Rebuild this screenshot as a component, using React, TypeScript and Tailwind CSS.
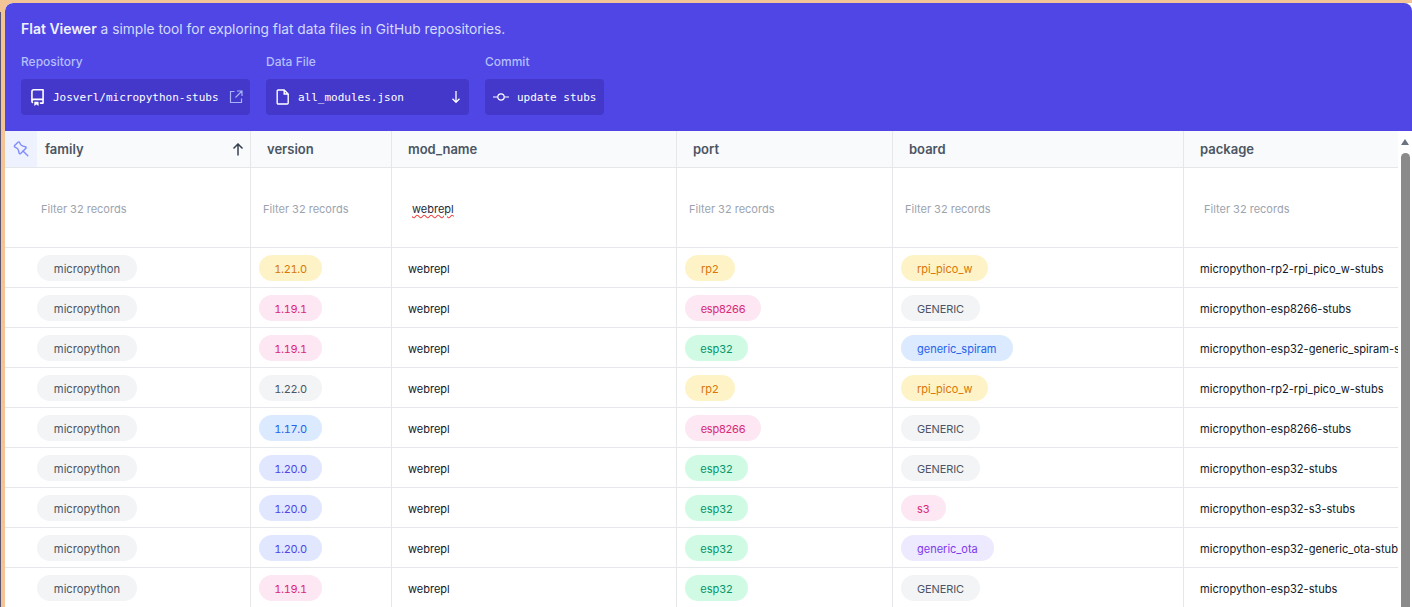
import React from "react";

const tone: Record<string, string> = {
  gray: "bg-[#f3f4f6] text-[#4b5563]",
  yellow: "bg-[#fef3c7] text-[#d97706]",
  pink: "bg-[#fce7f3] text-[#db2777]",
  blue: "bg-[#dbeafe] text-[#2563eb]",
  indigo: "bg-[#e0e7ff] text-[#4f46e5]",
  green: "bg-[#d1fae5] text-[#059669]",
  purple: "bg-[#ede9fe] text-[#7c3aed]",
};

const widths: Record<string, string> = {
  micropython: "w-[100px]",
  esp8266: "w-[76px] tracking-[-0.2px]",
  esp32: "w-[63px]",
  GENERIC: "w-[79px] tracking-[-0.1px]",
};

const cols = "grid grid-cols-[246px_141px_285px_216px_291px_214px]";

const rows: [string, string, string, string, string, string, string][] = [
  ["1.21.0", "yellow", "rp2", "yellow", "rpi_pico_w", "yellow", "micropython-rp2-rpi_pico_w-stubs"],
  ["1.19.1", "pink", "esp8266", "pink", "GENERIC", "gray", "micropython-esp8266-stubs"],
  ["1.19.1", "pink", "esp32", "green", "generic_spiram", "blue", "micropython-esp32-generic_spiram-stubs"],
  ["1.22.0", "gray", "rp2", "yellow", "rpi_pico_w", "yellow", "micropython-rp2-rpi_pico_w-stubs"],
  ["1.17.0", "blue", "esp8266", "pink", "GENERIC", "gray", "micropython-esp8266-stubs"],
  ["1.20.0", "indigo", "esp32", "green", "GENERIC", "gray", "micropython-esp32-stubs"],
  ["1.20.0", "indigo", "esp32", "green", "s3", "pink", "micropython-esp32-s3-stubs"],
  ["1.20.0", "indigo", "esp32", "green", "generic_ota", "purple", "micropython-esp32-generic_ota-stubs"],
  ["1.19.1", "pink", "esp32", "green", "GENERIC", "gray", "micropython-esp32-stubs"],
];

function Pill({ t, c, num }: { t: string; c: string; num?: boolean }) {
  const size = num ? "w-[63px] tabular-nums tracking-[-0.3px]" : widths[t] ?? "px-4";
  const font = t === "micropython" ? "text-[11.2px]" : "text-[11px]";
  return (
    <span className={`inline-flex h-[26px] items-center justify-center rounded-full leading-none ${font} ${size} ${tone[c]}`}>
      <span className="pt-[4px]">{t}</span>
    </span>
  );
}

function Head({ t, border = true }: { t: string; border?: boolean }) {
  return (
    <div className={`flex items-center pl-[16px] pt-[1px] text-[13px] font-semibold text-[#4b5563] ${border ? "border-r border-[#e5e7eb]" : ""}`}>{t}</div>
  );
}

function Filter({ t = "Filter 32 records", pl, dark }: { t?: string; pl: string; dark?: boolean }) {
  return (
    <div className={`flex items-center pt-[4px] ${pl} border-r border-[#e5e7eb] text-[11px] last:border-r-0`}>
      <span className={dark ? "text-[#1f2937] underline decoration-wavy decoration-[#ef4444]" : "text-[#9ca3af]"}>{t}</span>
    </div>
  );
}

export default function App() {
  return (
    <div className="flex h-[607px] w-[1412px] overflow-hidden bg-[#f3c596] font-['Inter',sans-serif]">
      <div className="mt-3 w-px shrink-0 bg-[#5a5470]" />
      <div className="ml-1 mt-[3px] flex h-[604px] w-[1407px] flex-col overflow-hidden rounded-tl-lg bg-white">
        <header className="h-[128px] shrink-0 rounded-t-lg bg-[#4f46e5] pl-4 pt-[18px]">
          <p className="text-[13.75px] leading-4 text-[#d3dbfe]">
            <span className="text-[14px] font-semibold text-[#eef2ff]">Flat Viewer</span> a simple tool for exploring flat data files in GitHub repositories.
          </p>
          <div className="mt-[16px] flex gap-4">
            <div>
              <div className="text-xs leading-[18px] font-medium text-[#b4bffd]">Repository</div>
              <div className="mt-[8px] flex h-9 w-[229px] items-center rounded bg-[#4338ca] pl-2 text-white">
                <svg width="17" height="17" viewBox="0 0 16 16" fill="currentColor" className="shrink-0">
                  <path fillRule="evenodd" d="M2 2.5A2.5 2.5 0 014.5 0h8.75a.75.75 0 01.75.75v12.5a.75.75 0 01-.75.75h-2.5a.75.75 0 110-1.5h1.75v-2h-8a1 1 0 00-.714 1.7.75.75 0 01-1.072 1.05A2.495 2.495 0 012 11.5v-9zm10.5-1V9h-8c-.356 0-.694.074-1 .208V2.5a1 1 0 011-1h8zM5 12.25v3.25a.25.25 0 00.4.2l1.45-1.087a.25.25 0 01.3 0L8.6 15.7a.25.25 0 00.4-.2v-3.25a.25.25 0 00-.25-.25h-3.5a.25.25 0 00-.25.25z" />
                </svg>
                <span className="ml-[7px] pt-[3px] font-['DejaVu_Sans_Mono',monospace] text-[11px]">Josverl/micropython-stubs</span>
                <svg width="14" height="14" viewBox="0 0 14 14" fill="none" stroke="#a5b4fc" strokeWidth="1.2" className="ml-[10px] shrink-0">
                  <path d="M5.5 1.5H1.5v11h11V8.5M8 1h5v5M13 1L6.5 7.5" />
                </svg>
              </div>
            </div>
            <div>
              <div className="text-xs leading-[18px] font-medium text-[#b4bffd]">Data File</div>
              <div className="mt-[8px] flex h-9 w-[203px] items-center rounded bg-[#4338ca] pl-[10px] text-white">
                <svg width="14" height="16" viewBox="0 0 14 16" fill="none" stroke="currentColor" strokeWidth="1.4" className="shrink-0">
                  <path d="M2.2 1h6l4 4v9a1 1 0 01-1 1h-9a1 1 0 01-1-1V2a1 1 0 011-1zM8.2 1v4h4" />
                </svg>
                <span className="ml-2 pt-[3px] font-['DejaVu_Sans_Mono',monospace] text-[11px]">all_modules.json</span>
                <svg width="10" height="14" viewBox="0 0 10 14" fill="none" stroke="currentColor" strokeWidth="1.3" className="ml-auto mr-[8px]">
                  <path d="M5 1v11M1.5 8.7L5 12.3l3.5-3.6" />
                </svg>
              </div>
            </div>
            <div>
              <div className="text-xs leading-[18px] font-medium text-[#b4bffd]">Commit</div>
              <div className="mt-[8px] flex h-9 w-[119px] items-center rounded bg-[#4338ca] pl-2 text-white">
                <svg width="16" height="10" viewBox="0 0 16 10" fill="none" stroke="currentColor" strokeWidth="1.2" className="shrink-0">
                  <circle cx="8" cy="5" r="3.2" />
                  <path d="M0 5h4.8M11.2 5H16" />
                </svg>
                <span className="ml-2 pt-[3px] font-['DejaVu_Sans_Mono',monospace] text-[11px]">update stubs</span>
              </div>
            </div>
          </div>
        </header>
        <div className="flex min-h-0 flex-1">
          <div className="w-[1393px] shrink-0 overflow-hidden">
            <div className={`${cols} h-[37px] border-b border-[#e5e7eb] bg-[#f9fafb]`}>
              <div className="flex items-center border-r border-[#e5e7eb] pr-[5px] text-[13px] font-semibold text-[#4b5563]">
                <div className="flex h-full w-8 items-center justify-center bg-[#eef2ff] text-[#818cf8]">
                  <svg width="16" height="16" viewBox="0 0 16 16" fill="none" stroke="currentColor" strokeWidth="1.4" strokeLinecap="round" strokeLinejoin="round">
                    <path d="M5 1.2a1 1 0 011.6.3l.7 1.5a3.8 3.8 0 002.6 2.1l2.5.6c.8.2 1 1.1.5 1.6l-5.2 5.2c-.5.5-1.4.3-1.6-.5l-.6-2.5a3.8 3.8 0 00-2.1-2.6l-1.5-.7a1 1 0 01-.3-1.6z" />
                    <path d="M10 10l4.8 4.8" />
                  </svg>
                </div>
                <span className="ml-2 pt-[1px]">family</span>
                <svg width="12" height="13" viewBox="0 0 12 13" fill="none" stroke="#374151" strokeWidth="1.5" className="ml-auto mr-[1px]">
                  <path d="M6 12.5V1M1.5 5.5L6 1l4.5 4.5" />
                </svg>
              </div>
              <Head t="version" />
              <Head t="mod_name" />
              <Head t="port" />
              <Head t="board" />
              <Head t="package" border={false} />
            </div>
            <div className={`${cols} h-[80px] border-b border-[#e5e7eb]`}>
              <Filter pl="pl-9" />
              <Filter pl="pl-3" />
              <Filter t="webrepl" pl="pl-5" dark />
              <Filter pl="pl-3" />
              <Filter pl="pl-3" />
              <Filter pl="pl-5" />
            </div>
            {rows.map((r, i) => (
              <div key={i} className={`${cols} h-10 border-b border-[#e5e7eb] text-[11px] text-[#111827]`}>
                <div className="flex items-center border-r border-[#e5e7eb] pl-8"><Pill t="micropython" c="gray" /></div>
                <div className="flex items-center border-r border-[#e5e7eb] pl-2"><Pill t={r[0]} c={r[1]} num /></div>
                <div className="flex items-center border-r border-[#e5e7eb] pl-4 pt-[4px]">webrepl</div>
                <div className="flex items-center border-r border-[#e5e7eb] pl-2"><Pill t={r[2]} c={r[3]} /></div>
                <div className="flex items-center border-r border-[#e5e7eb] pl-2"><Pill t={r[4]} c={r[5]} /></div>
                <div className="flex items-center overflow-hidden whitespace-nowrap pl-4 pt-[4px] text-[11.1px]">{r[6]}</div>
              </div>
            ))}
          </div>
          <div className="w-[14px] shrink-0 bg-white">
            <div className="mx-auto mt-[8px] h-0 w-0 border-x-[4px] border-b-[6px] border-x-transparent border-b-[#6b7280]" />
            <div className="mx-auto mt-[8px] h-[500px] w-[9px] rounded-full bg-[#8a8a8a]" />
          </div>
        </div>
      </div>
    </div>
  );
}
